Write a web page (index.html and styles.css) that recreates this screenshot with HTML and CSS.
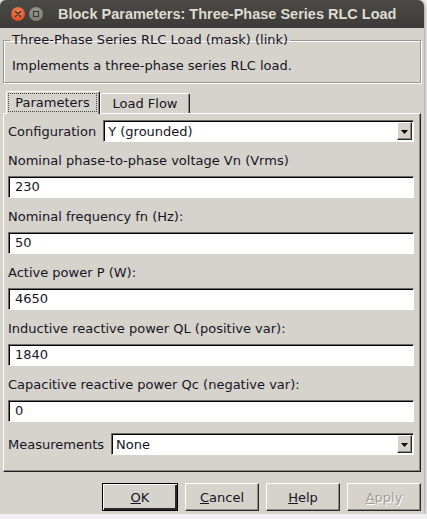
FILE: index.html
```html
<!DOCTYPE html>
<html lang="en">
<head>
  <meta charset="UTF-8">
  <meta name="viewport" content="width=device-width, initial-scale=1.0">
  <title>Block Parameters: Three-Phase Series RLC Load</title>
  <link rel="stylesheet" href="styles.css">
</head>
<body>
  <div class="window">
    <!-- Title bar -->
    <div class="titlebar">
      <span class="win-btn close">
        <svg width="14" height="14" viewBox="0 0 14 14"><path d="M4.5 4.5 L9.5 9.5 M9.5 4.5 L4.5 9.5" stroke="#3a2a22" stroke-width="1.4" stroke-linecap="round"/></svg>
      </span>
      <span class="win-btn minimize">
        <svg width="14" height="14" viewBox="0 0 14 14"><rect x="4.5" y="4.5" width="5" height="5" fill="none" stroke="#3c3b37" stroke-width="1.2"/></svg>
      </span>
      <span class="title">Block Parameters: Three-Phase Series RLC Load</span>
    </div>

    <div class="content">
      <!-- Mask description -->
      <fieldset class="mask-box">
        <legend>Three-Phase Series RLC Load (mask) (link)</legend>
        <p>Implements a three-phase series RLC load.</p>
      </fieldset>

      <!-- Tabs -->
      <div class="tabs">
        <div class="tab active"><span class="focus">Parameters</span></div>
        <div class="tab">Load Flow</div>
      </div>

      <div class="panel">
        <div class="inline-row">
          <label>Configuration</label>
          <div class="select">
            <span>Y (grounded)</span>
            <span class="drop"><svg width="7" height="4" viewBox="0 0 7 4"><path d="M0 0 H7 L3.5 4 Z" fill="#000"/></svg></span>
          </div>
        </div>

        <div class="field">
          <label>Nominal phase-to-phase voltage Vn (Vrms)</label>
          <div class="input">230</div>
        </div>
        <div class="field">
          <label>Nominal frequency fn (Hz):</label>
          <div class="input">50</div>
        </div>
        <div class="field">
          <label>Active power P (W):</label>
          <div class="input">4650</div>
        </div>
        <div class="field">
          <label>Inductive reactive power QL (positive var):</label>
          <div class="input">1840</div>
        </div>
        <div class="field">
          <label>Capacitive reactive power Qc (negative var):</label>
          <div class="input">0</div>
        </div>

        <div class="inline-row last">
          <label>Measurements</label>
          <div class="select">
            <span>None</span>
            <span class="drop"><svg width="7" height="4" viewBox="0 0 7 4"><path d="M0 0 H7 L3.5 4 Z" fill="#000"/></svg></span>
          </div>
        </div>
      </div>

      <!-- Dialog buttons -->
      <div class="buttons">
        <button class="default"><u>O</u>K</button>
        <button><u>C</u>ancel</button>
        <button><u>H</u>elp</button>
        <button class="disabled"><u>A</u>pply</button>
      </div>
    </div>
  </div>
</body>
</html>
```

FILE: styles.css
```css
body {
  margin: 0;
  background-color: #efefef;
  font-family: "DejaVu Sans", sans-serif;
  font-size: 13px;
  color: #15151f;
}

.window {
  width: 424px;
  height: 514px;
  background-color: #d6d2cc;
  border-radius: 6px 6px 0 0;
  box-shadow: 0 1px 4px rgba(0, 0, 0, 0.55);
  overflow: hidden;
}

/* Title bar */
.titlebar {
  height: 28px;
  display: flex;
  align-items: center;
  padding-left: 11px;
  background: linear-gradient(#4b4a46, #3c3b37);
}

.win-btn {
  width: 14px;
  height: 14px;
  border-radius: 50%;
  display: flex;
}

.close {
  background: radial-gradient(circle at 50% 35%, #f5895a, #df5327 70%, #b8401c);
  margin-right: 4px;
}

.minimize {
  background: radial-gradient(circle at 50% 35%, #9d9c97, #7f7e79 75%, #66655f);
}

.title {
  margin-left: 15px;
  font-family: "Liberation Sans", sans-serif;
  font-weight: bold;
  font-size: 14.5px;
  color: #dfdbd2;
}

/* Content */
.content {
  padding: 4px 3px 0 3px;
}

.mask-box {
  margin: 0;
  padding: 0 6px 8px 6px;
  border: 1px solid #9c9891;
  box-shadow: 1px 1px 0 #fff, inset 1px 1px 0 #fff;
}

.mask-box legend {
  padding: 0 2px;
  line-height: 16px;
}

.mask-box p {
  margin: 10px 2px 0 2px;
  line-height: 16px;
}

/* Tabs */
.tabs {
  display: flex;
  align-items: flex-end;
  height: 22px;
  margin-top: 8px;
  padding-left: 3px;
}

.tab {
  height: 20px;
  width: 90px;
  box-sizing: border-box;
  display: flex;
  align-items: center;
  justify-content: center;
  border-top: 1px solid #fff;
  border-left: 1px solid #fff;
  border-right: 1px solid #1e1e1e;
  border-radius: 2px 2px 0 0;
  box-shadow: inset -1px 0 0 #8d8a84;
  line-height: 16px;
}

.tab.active {
  height: 23px;
  width: 94px;
  margin-bottom: -1px;
  position: relative;
  background-color: #d6d2cc;
  z-index: 1;
  padding: 1px 2px 2px 1px;
}

.tab .focus {
  flex: 1;
  align-self: stretch;
  display: flex;
  align-items: center;
  justify-content: center;
  border: 1px dotted #444;
}

.panel {
  border-top: 1px solid #fff;
  border-left: 1px solid #fff;
  border-right: 1px solid #1e1e1e;
  border-bottom: 1px solid #1e1e1e;
  box-shadow: inset -1px -1px 0 #8d8a84;
  padding: 6px 6px 16px 4px;
}

.inline-row {
  display: flex;
  align-items: center;
  gap: 7px;
  margin-bottom: 10px;
}

.inline-row.last {
  margin-top: 11px;
  margin-bottom: 0;
}

.select {
  flex: 1;
  height: 22px;
  box-sizing: border-box;
  display: flex;
  align-items: center;
  justify-content: space-between;
  background-color: #fff;
  border: 1px solid;
  border-color: #6e6b66 #fff #fff #6e6b66;
  box-shadow: inset 1px 1px 0 #000;
  padding: 0 1px 0 4px;
}

.drop {
  width: 15px;
  height: 18px;
  box-sizing: border-box;
  display: flex;
  align-items: center;
  justify-content: center;
  padding-top: 2px;
  background-color: #d6d2cc;
  border-top: 1px solid #fff;
  border-left: 1px solid #fff;
  border-right: 1px solid #2a2a2a;
  border-bottom: 1px solid #2a2a2a;
  box-shadow: inset -1px -1px 0 #8d8a84;
}

.field {
  margin-bottom: 10px;
}

.field label {
  display: block;
  line-height: 18px;
  margin-bottom: 6px;
}

.input {
  height: 22px;
  box-sizing: border-box;
  background-color: #fff;
  border: 1px solid;
  border-color: #6e6b66 #fff #fff #6e6b66;
  box-shadow: inset 1px 1px 0 #000;
  padding-left: 6px;
  line-height: 20px;
}

/* Buttons */
.buttons {
  display: flex;
  justify-content: flex-end;
  gap: 7px;
  margin-top: 11px;
}

.buttons button {
  width: 74px;
  height: 28px;
  font-family: "DejaVu Sans", sans-serif;
  font-size: 13px;
  color: #15151f;
  background-color: #d6d2cc;
  border-top: 1px solid #fff;
  border-left: 1px solid #fff;
  border-right: 1px solid #2a2a2a;
  border-bottom: 1px solid #2a2a2a;
  box-shadow: inset -1px -1px 0 #8d8a84;
  padding: 0;
}

.buttons button.default {
  width: 76px;
  border: 1px solid #000;
  box-shadow: inset 1px 1px 0 #fff, inset -2px -2px 0 #2a2a2a;
}

.buttons button.disabled {
  color: #a29e97;
  text-shadow: 1px 1px 0 #fff;
}
```
